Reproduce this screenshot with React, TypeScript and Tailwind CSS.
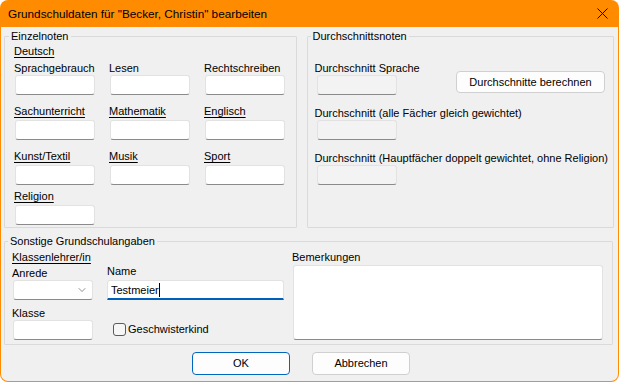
import React from 'react';
import { ChevronDown } from 'lucide-react';

const font = { fontFamily: '"Liberation Sans", Arial, sans-serif' };

function TextBox({ width = 'w-[80px]', disabled = false }: { width?: string; disabled?: boolean }) {
  return (
    <div
      className={`${width} h-[20px] ml-[1px] rounded-[3px] border border-[#e2e2e2] border-b-[#8a8a8a] ${
        disabled ? 'bg-[#f3f3f3]' : 'bg-white'
      }`}
    />
  );
}

function Label({ children, u = false }: { children: React.ReactNode; u?: boolean }) {
  return (
    <div className={`h-[14px] leading-[14px] whitespace-nowrap ${u ? 'underline underline-offset-[2px]' : ''}`}>
      {children}
    </div>
  );
}

function Field({ label, u = false, gap = 'mt-0' }: { label: string; u?: boolean; gap?: string }) {
  return (
    <div className="flex flex-col">
      <Label u={u}>{label}</Label>
      <div className={gap}>
        <TextBox />
      </div>
    </div>
  );
}

function Group({ title, className, legend, children }: { title: string; className: string; legend: string; children: React.ReactNode }) {
  return (
    <fieldset className={`border border-[#dadada] rounded-[1px] p-0 m-0 min-w-0 ${className}`}>
      <legend className={`${legend} px-[2px] leading-[16px] text-black`}>{title}</legend>
      {children}
    </fieldset>
  );
}

function Button({ children, primary = false }: { children: React.ReactNode; primary?: boolean }) {
  return (
    <div
      className={`flex items-center justify-center h-[23px] w-[98px] rounded-[4px] bg-[#fdfdfd] border ${
        primary ? 'border-[#0067c0]' : 'border-[#d0d0d0]'
      }`}
    >
      {children}
    </div>
  );
}

export default function App() {
  return (
    <div className="w-[619px] h-[382px] bg-white" style={font}>
      <div className="w-[619px] h-[382px] bg-[#ff8c00] rounded-[8px] overflow-hidden text-[11px] text-black flex flex-col">
        {/* Title bar */}
        <div className="h-[27px] flex items-center justify-between pl-[8px] pr-[11px]">
          <span className="leading-[16px] text-[11.75px]">Grundschuldaten für "Becker, Christin" bearbeiten</span>
          <svg width="11" height="11" viewBox="0 0 11 11">
            <path d="M0.5 0.5 L10.5 10.5 M10.5 0.5 L0.5 10.5" stroke="#000" strokeWidth="1" />
          </svg>
        </div>

        {/* Body */}
        <div className="mx-[1px] mb-[1px] h-[354px] bg-[#f0f0f0] rounded-b-[7px] pl-[3px] pr-[4px]">
          <div className="flex mt-[1px]">
            <Group title="Einzelnoten" className="w-[293px] h-[200px]" legend="ml-[4px]">
              <div className="pl-[9px]">
                <Label u>Deutsch</Label>
                <div className="grid grid-cols-[95px_95px_95px] mt-[3px]">
                  <Field label="Sprachgebrauch" />
                  <Field label="Lesen" />
                  <Field label="Rechtschreiben" />
                </div>
                <div className="grid grid-cols-[95px_95px_95px] mt-[9px]">
                  <Field label="Sachunterricht" u gap="mt-[2px]" />
                  <Field label="Mathematik" u gap="mt-[2px]" />
                  <Field label="Englisch" u gap="mt-[2px]" />
                </div>
                <div className="grid grid-cols-[95px_95px_95px] mt-[9px]">
                  <Field label="Kunst/Textil" u gap="mt-[2px]" />
                  <Field label="Musik" u gap="mt-[2px]" />
                  <Field label="Sport" u gap="mt-[2px]" />
                </div>
                <div className="mt-[4px]">
                  <Field label="Religion" u gap="mt-[2px]" />
                </div>
              </div>
            </Group>

            <Group title="Durchschnittsnoten" className="w-[308px] h-[200px] ml-[10px]" legend="ml-[3px]">
              <div className="pl-[7px] pr-[8px]">
                <div className="flex justify-between mt-[17px]">
                  <div className="flex flex-col">
                    <Label>Durchschnitt Sprache</Label>
                    <div className="ml-[1px]">
                      <TextBox disabled />
                    </div>
                  </div>
                  <div className="mt-[10px] flex items-center justify-center h-[22px] w-[149px] rounded-[4px] bg-[#fdfdfd] border border-[#d0d0d0]">
                    Durchschnitte berechnen
                  </div>
                </div>
                <div className="flex flex-col mt-[11px]">
                  <Label>Durchschnitt (alle Fächer gleich gewichtet)</Label>
                  <div className="ml-[1px]">
                    <TextBox disabled />
                  </div>
                </div>
                <div className="flex flex-col mt-[11px]">
                  <Label>Durchschnitt (Hauptfächer doppelt gewichtet, ohne Religion)</Label>
                  <div className="ml-[1px]">
                    <TextBox disabled />
                  </div>
                </div>
              </div>
            </Group>
          </div>

          <Group title="Sonstige Grundschulangaben" className="w-[609px] h-[112px] mt-[5px]" legend="ml-[3px]">
            <div className="flex pl-[7px] mt-[1px]">
              <div className="w-[280px]">
                <Label u>Klassenlehrer/in</Label>
                <div className="flex">
                  <div className="w-[95px] flex flex-col">
                    <div className="mt-[2px]">
                      <Label>Anrede</Label>
                    </div>
                    <div className="ml-[1px] w-[80px] h-[20px] rounded-[3px] border border-[#e2e2e2] border-b-[#8a8a8a] bg-white flex items-center justify-end pr-[4px]">
                      <ChevronDown size={12} strokeWidth={1.25} className="text-[#505050]" />
                    </div>
                    <div className="mt-[6px]">
                      <Label>Klasse</Label>
                    </div>
                    <TextBox />
                  </div>
                  <div className="w-[177px] flex flex-col">
                    <Label>Name</Label>
                    <div className="mt-[2px] h-[20px] w-[177px] bg-white rounded-t-[3px] border border-[#e2e2e2] border-b-2 border-b-[#005fb8] flex items-center pl-[3px]">
                      <span className="leading-[14px]">Testmeier</span>
                      <span className="w-[1px] h-[14px] bg-black" />
                    </div>
                    <div className="mt-[21px] ml-[6px] flex items-center h-[16px]">
                      <div className="w-[13px] h-[13px] rounded-[3px] border border-[#5a5a5a] bg-[#f6f6f6]" />
                      <span className="ml-[2px] leading-[14px]">Geschwisterkind</span>
                    </div>
                  </div>
                </div>
              </div>
              <div className="flex flex-col">
                <Label>Bemerkungen</Label>
                <div className="mt-[1px] ml-[1px] w-[310px] h-[75px] bg-white rounded-[3px] border border-[#e2e2e2] border-b-[#8a8a8a]" />
              </div>
            </div>
          </Group>

          <div className="flex gap-[22px] pl-[188px] mt-[7px]">
            <Button primary>OK</Button>
            <Button>Abbrechen</Button>
          </div>
        </div>
      </div>
    </div>
  );
}
